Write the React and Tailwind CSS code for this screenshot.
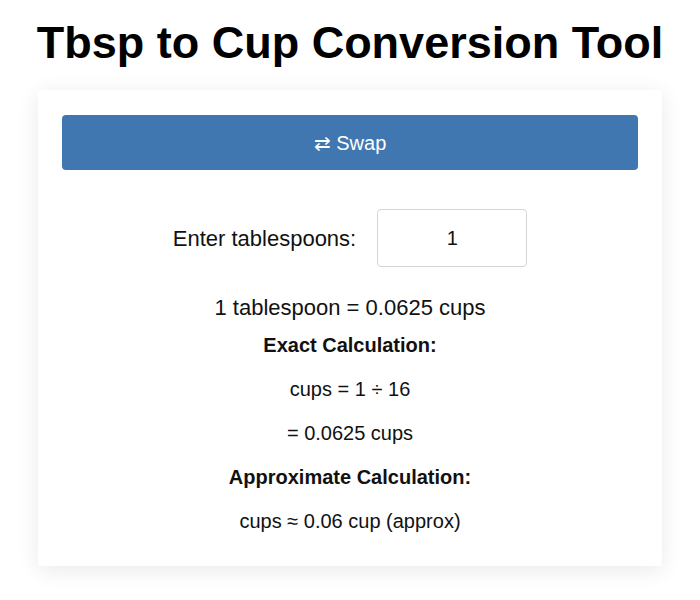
export default function App() {
  return (
    <div className="min-h-[600px] bg-white text-black" style={{ fontFamily: '"Liberation Sans", Arial, sans-serif' }}>
      <h1 className="pt-[18px] text-center text-[45px] font-bold leading-[50px] text-black">
        Tbsp to Cup Conversion Tool
      </h1>
      <div className="mx-[38px] mt-[22px] rounded-[2px] bg-white px-6 pt-[25px] pb-[33px] shadow-[0_4px_22px_rgba(0,0,0,0.09)]">
        <button className="flex h-[55px] w-full items-center justify-center rounded-[4px] bg-[#4177b1] text-[20px] text-white">
          ⇄ Swap
        </button>
        <div className="mt-[39px] flex items-center justify-center gap-[21px]">
          <label className="text-[22px] leading-[25px] text-[#111]">Enter tablespoons:</label>
          <input
            type="text"
            defaultValue="1"
            className="h-[58px] w-[150px] rounded-[4px] border border-[#d4d4d4] text-center text-[20px] text-[#111] outline-none"
          />
        </div>
        <div className="mt-[28px] text-center text-[22px] leading-[25px] text-[#111]">
          1 tablespoon = 0.0625 cups
        </div>
        <div className="mt-[14px] flex flex-col items-center gap-[21px] text-[20px] leading-[23px] text-[#111]">
          <div className="font-bold">Exact Calculation:</div>
          <div>cups = 1 ÷ 16</div>
          <div>= 0.0625 cups</div>
          <div className="font-bold">Approximate Calculation:</div>
          <div>cups ≈ 0.06 cup (approx)</div>
        </div>
      </div>
    </div>
  );
}
